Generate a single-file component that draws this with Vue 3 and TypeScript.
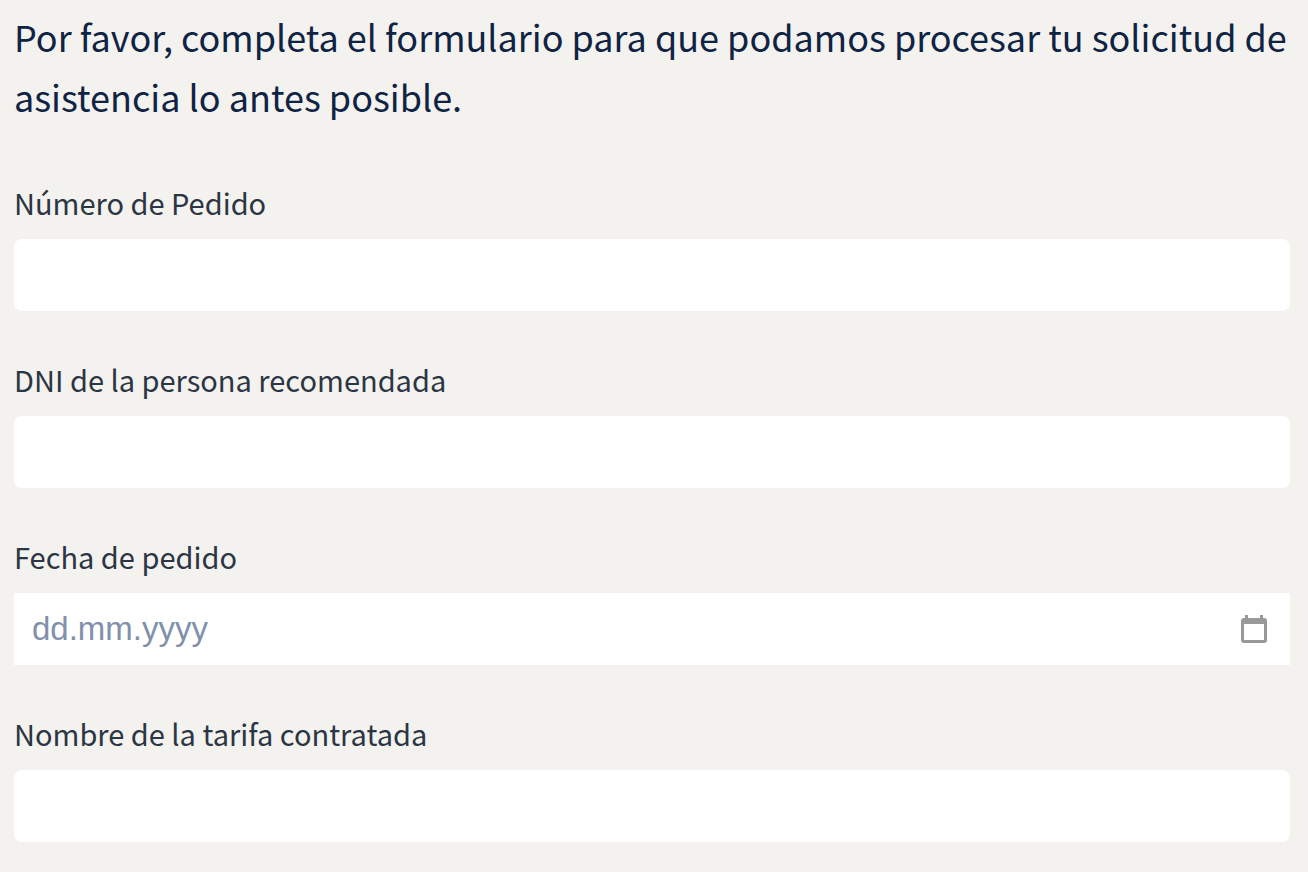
<script setup lang="ts">
import { reactive, ref } from 'vue'

interface Field {
  id: string
  label: string
  kind: 'text' | 'date'
}

const fields: Field[] = [
  { id: 'order-number', label: 'Número de Pedido', kind: 'text' },
  { id: 'referred-dni', label: 'DNI de la persona recomendada', kind: 'text' },
  { id: 'order-date', label: 'Fecha de pedido', kind: 'date' },
  { id: 'tariff-name', label: 'Nombre de la tarifa contratada', kind: 'text' },
]

const values = reactive<Record<string, string>>({})
const dateInput = ref<HTMLInputElement[]>([])

function focusDate() {
  dateInput.value[0]?.focus()
}
</script>

<template>
  <form class="request-form" @submit.prevent>
    <p class="intro">
      Por favor, completa el formulario para que podamos procesar tu solicitud de asistencia lo antes posible.
    </p>
    <div v-for="field in fields" :key="field.id" class="field">
      <label class="label" :for="field.id">{{ field.label }}</label>
      <input v-if="field.kind === 'text'" :id="field.id" v-model="values[field.id]" class="control" type="text" />
      <div v-else class="control date">
        <input
          :id="field.id"
          ref="dateInput"
          v-model="values[field.id]"
          class="date-text"
          type="text"
          inputmode="numeric"
          placeholder="dd.mm.yyyy"
        />
        <button class="picker" type="button" aria-label="Elegir fecha" @click="focusDate">
          <svg width="26" height="28" viewBox="0 0 26 28" fill="#999" aria-hidden="true">
            <path
              fill-rule="evenodd"
              d="M4 0h3v3h12V0h3v3h1a3 3 0 0 1 3 3v19a3 3 0 0 1-3 3H3a3 3 0 0 1-3-3V6a3 3 0 0 1 3-3h1zM3 9v16h20V9z"
            />
          </svg>
        </button>
      </div>
    </div>
  </form>
</template>

<style>
body {
  margin: 0;
  background: #f4f2ee;
}
</style>

<style scoped>
.request-form {
  padding: 6px 18px 30px 14px;
  font-family: "Noto Sans CJK SC", "Noto Sans", sans-serif;
}

.intro {
  margin: 0 0 52px;
  color: #0f2344;
  font-size: 36px;
  line-height: 60px;
}

.field + .field {
  margin-top: 44px;
}

.label {
  display: block;
  margin-bottom: 13px;
  color: #2b3544;
  font-size: 29px;
  line-height: 48px;
}

.control {
  display: block;
  box-sizing: border-box;
  width: 100%;
  height: 72px;
  padding: 0 18px;
  border: 0;
  border-radius: 8px;
  background: #fff;
  color: #0f2344;
  font-family: "Liberation Sans", Arial, sans-serif;
  font-size: 33px;
}

.date {
  display: flex;
  align-items: center;
  justify-content: space-between;
  padding-right: 23px;
  border-radius: 0;
}

.date-text {
  flex: 1;
  min-width: 0;
  padding: 0;
  border: 0;
  background: transparent;
  color: inherit;
  font: inherit;
}

.date-text::placeholder {
  color: #8190ab;
  opacity: 1;
}

.picker {
  display: flex;
  padding: 0;
  border: 0;
  background: transparent;
  cursor: pointer;
}
</style>
